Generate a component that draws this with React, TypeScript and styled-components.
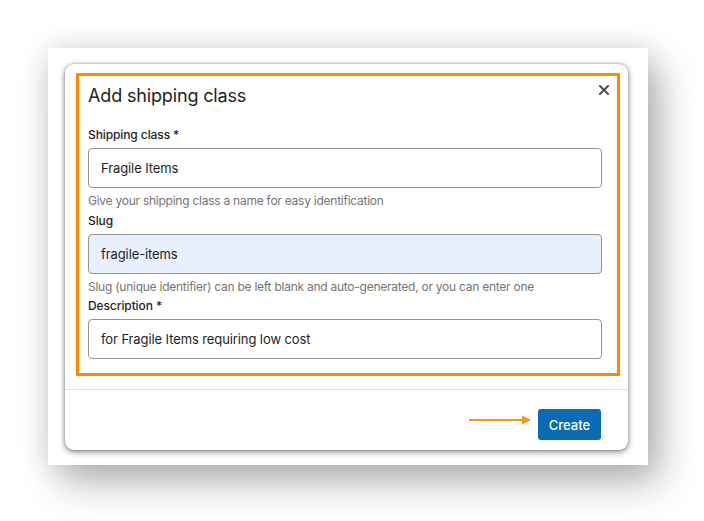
import React from "react";
import styled, { createGlobalStyle } from "styled-components";

const Global = createGlobalStyle`
  html, body { margin: 0; padding: 0; background: #ffffff; }
  body { font-family: Inter, "Noto Sans", "Liberation Sans", sans-serif; -webkit-font-smoothing: antialiased; }
  * { box-sizing: border-box; }
`;

const Page = styled.div`
  width: 704px;
  height: 521px;
  padding: 48px 0 0 48px;
  overflow: hidden;
`;

const Frame = styled.div`
  width: 600px;
  height: 417px;
  background: #ffffff;
  padding: 16px 20px 15px 17px;
  box-shadow: 12px 18px 36px rgba(0, 0, 0, 0.28), 0 0 28px rgba(0, 0, 0, 0.12);
`;

const Modal = styled.div`
  position: relative;
  width: 563px;
  height: 386px;
  background: #ffffff;
  border-radius: 9px;
  box-shadow: 0 2px 6px rgba(0, 0, 0, 0.45), 0 0 3px rgba(0, 0, 0, 0.3);
  display: flex;
  flex-direction: column;
`;

const Highlight = styled.div`
  margin: 9px 8px 0 11px;
  height: 303px;
  border: 3px solid #ff8c00;
  padding: 8px 15px 0 9px;
  display: flex;
  flex-direction: column;
`;

const Title = styled.h1`
  margin: 0 0 19px 0;
  font-size: 18px;
  line-height: 24px;
  font-weight: 400;
  color: #1e1e1e;
  letter-spacing: -0.15px;
`;

const Label = styled.label`
  display: block;
  font-size: 12px;
  line-height: 16px;
  font-weight: 500;
  color: #1e1e1e;
  margin-bottom: 5px;
  letter-spacing: -0.1px;
`;

const Input = styled.div<{ $filled?: boolean }>`
  height: 40px;
  border: 1px solid #949494;
  border-radius: 4px;
  background: ${(p) => (p.$filled ? "#e8f0fe" : "#ffffff")};
  padding: 0 12px;
  display: flex;
  align-items: center;
  font-size: 13px;
  color: #1e1e1e;
  letter-spacing: -0.1px;
`;

const Help = styled.p<{ $after: number }>`
  margin: 5px 0 ${(p) => p.$after}px 0;
  font-size: 12px;
  line-height: 16px;
  color: #757575;
  letter-spacing: -0.25px;
`;

const Close = styled.button`
  position: absolute;
  top: 19px;
  right: 17px;
  width: 14px;
  height: 14px;
  padding: 0;
  border: 0;
  background: transparent;
  display: flex;
  align-items: center;
  justify-content: center;
  cursor: pointer;
`;

const Divider = styled.hr`
  margin: 13px 0 0 0;
  border: 0;
  border-top: 1px solid #e0e0e0;
  width: 100%;
`;

const Footer = styled.div`
  display: flex;
  justify-content: flex-end;
  align-items: center;
  padding: 19px 27px 0 0;
  gap: 7px;
`;

const Arrow = styled.svg`
  display: block;
  margin-top: -9px;
`;

const Button = styled.button`
  height: 31px;
  width: 63px;
  border: 0;
  border-radius: 3px;
  background: #0a6bb5;
  color: #ffffff;
  font-family: inherit;
  font-size: 13px;
  font-weight: 500;
  padding: 0;
  cursor: pointer;
`;

export default function App() {
  return (
    <>
      <Global />
      <Page>
        <Frame>
          <Modal>
            <Highlight>
              <Title>Add shipping class</Title>
              <Label>Shipping class *</Label>
              <Input>Fragile Items</Input>
              <Help $after={4}>Give your shipping class a name for easy identification</Help>
              <Label>Slug</Label>
              <Input $filled>fragile-items</Input>
              <Help $after={3}>
                Slug (unique identifier) can be left blank and auto-generated, or you can enter one
              </Help>
              <Label>Description *</Label>
              <Input>for Fragile Items requiring low cost</Input>
            </Highlight>
            <Close aria-label="Close">
              <svg width="10" height="10" viewBox="0 0 10 10">
                <path d="M1 1 L9 9 M9 1 L1 9" stroke="#505050" strokeWidth="2" strokeLinecap="square" />
              </svg>
            </Close>
            <Divider />
            <Footer>
              <Arrow width="62" height="10" viewBox="0 0 62 10">
                <line x1="0" y1="5" x2="54" y2="5" stroke="#f7941d" strokeWidth="2" />
                <polygon points="53,0.5 62,5 53,9.5" fill="#f7941d" />
              </Arrow>
              <Button>Create</Button>
            </Footer>
          </Modal>
        </Frame>
      </Page>
    </>
  );
}
